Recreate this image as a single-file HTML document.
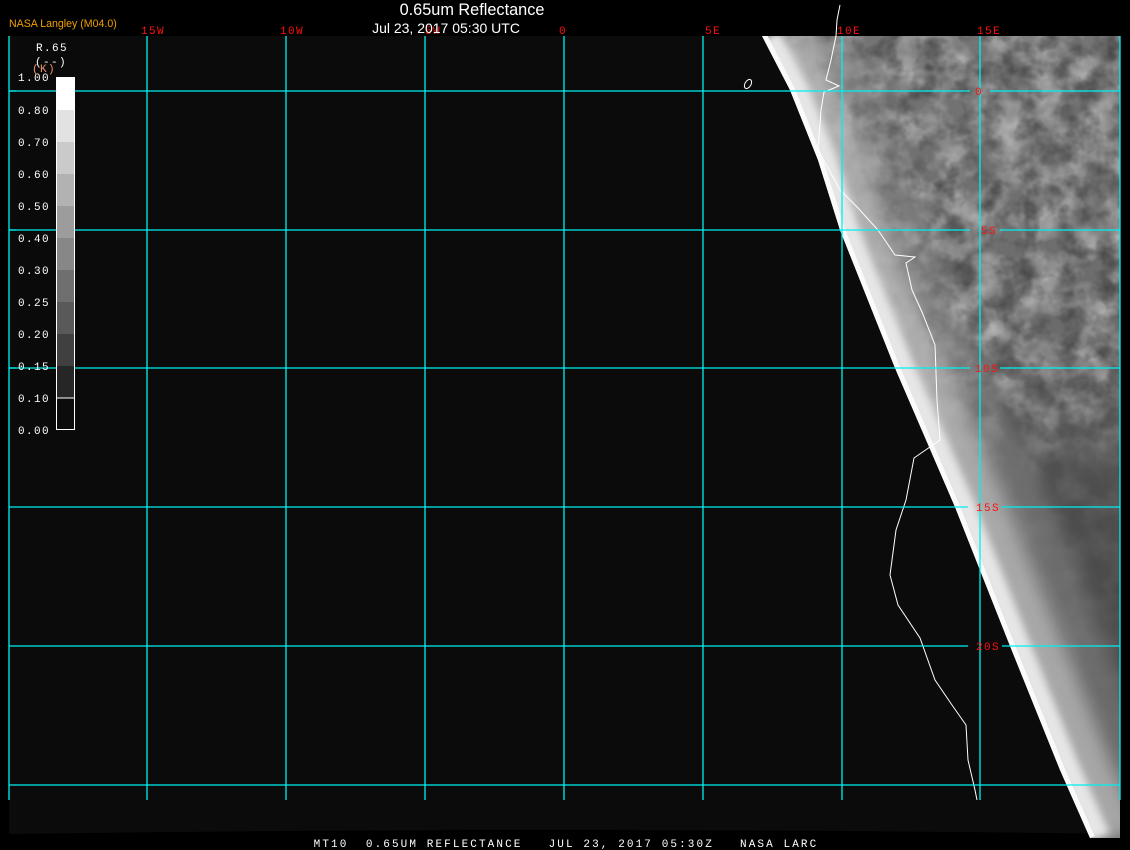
<!DOCTYPE html>
<html><head><meta charset="utf-8"><style>
html,body{margin:0;padding:0;background:#000;width:1130px;height:850px;overflow:hidden}
svg{display:block}
.m{font-family:"Liberation Mono","DejaVu Sans Mono",monospace;font-size:11px;letter-spacing:1.4px}
</style></head><body>
<svg width="1130" height="850" viewBox="0 0 1130 850" xmlns="http://www.w3.org/2000/svg">
<defs>
<clipPath id="sat"><polygon points="762,36 790,90 818,160 840,230 895,368 955,507 1010,646 1060,770 1090,838 1120,838 1120,36"/></clipPath>
<linearGradient id="base" x1="0" y1="0" x2="0" y2="1">
<stop offset="0" stop-color="#747474"/><stop offset="0.4" stop-color="#6a6a6a"/><stop offset="0.55" stop-color="#505050"/><stop offset="1" stop-color="#444"/>
</linearGradient>
<filter id="cl" x="0" y="0" width="100%" height="100%">
<feTurbulence type="fractalNoise" baseFrequency="0.035" numOctaves="3" seed="7"/>
<feColorMatrix type="matrix" values="0 0 0 0 0.55  0 0 0 0 0.55  0 0 0 0 0.55  1.6 0 0 0 -0.55"/>
</filter>
<filter id="cl2" x="0" y="0" width="100%" height="100%">
<feTurbulence type="fractalNoise" baseFrequency="0.05" numOctaves="3" seed="3"/>
<feColorMatrix type="matrix" values="0 0 0 0 0.05  0 0 0 0 0.05  0 0 0 0 0.05  0 1.8 0 0 -0.75"/>
</filter>
<filter id="bl" x="-20%" y="-20%" width="140%" height="140%"><feGaussianBlur stdDeviation="9"/></filter>
<filter id="bl2" x="-20%" y="-20%" width="140%" height="140%"><feGaussianBlur stdDeviation="4"/></filter>
<linearGradient id="fade" x1="0" y1="0" x2="0" y2="1"><stop offset="0" stop-color="#fff"/><stop offset="0.42" stop-color="#fff"/><stop offset="0.55" stop-color="#fff" stop-opacity="0.2"/><stop offset="1" stop-color="#fff" stop-opacity="0.05"/></linearGradient>
<mask id="mk"><rect x="740" y="36" width="390" height="800" fill="url(#fade)"/></mask>
</defs>
<rect width="1130" height="850" fill="#000"/>
<path d="M9,36 H1120 V834 Q566,826 9,834 Z" fill="#0b0b0b"/>
<g clip-path="url(#sat)">
<rect x="740" y="36" width="390" height="810" fill="url(#base)"/>
<g mask="url(#mk)">
<rect x="740" y="36" width="390" height="810" filter="url(#cl)"/>
<rect x="740" y="36" width="390" height="810" filter="url(#cl2)"/>
</g>
<g fill="none" stroke-linejoin="round">
<polyline points="812,36 838,90 866,160 888,230 948,368 1012,507 1070,646 1120,770 1150,838" stroke="#8c8c8c" stroke-width="70" opacity="0.5" filter="url(#bl)"/>
<polyline points="787,36 813,90 841,160 863,230 921,368 984,507 1040,646 1090,770 1120,838" stroke="#bdbdbd" stroke-width="44" opacity="0.75" filter="url(#bl)"/>
<polyline points="770,36 798,90 826,160 848,230 904,368 965,507 1020,646 1070,770 1100,838" stroke="#e6e6e6" stroke-width="22" filter="url(#bl2)"/>
<polyline points="762,36 790,90 818,160 840,230 895,368 955,507 1010,646 1060,770 1090,838" stroke="#fafafa" stroke-width="10"/>
</g>
</g>
<rect x="1120" y="36" width="10" height="814" fill="#000"/>
<polyline fill="none" stroke="#fff" stroke-width="1" points="840,5 837,20 836,36 831,60 826,80 839,86 824,92 821,110 818,150 828,168 840,190 858,208 878,230 895,255 915,257 906,263 912,290 922,312 935,345 937,400 940,440 914,458 906,500 896,530 890,575 898,605 920,638 935,680 952,705 966,725 968,760 975,790 977,800"/>
<ellipse cx="748" cy="84" rx="3" ry="5" transform="rotate(30 748 84)" fill="none" stroke="#fff" stroke-width="1"/>
<g stroke="#00f0f0" stroke-width="1.3">
<line x1="9" y1="36" x2="9" y2="800"/><line x1="147" y1="36" x2="147" y2="800"/><line x1="286" y1="36" x2="286" y2="800"/><line x1="425" y1="36" x2="425" y2="800"/><line x1="564" y1="36" x2="564" y2="800"/><line x1="703" y1="36" x2="703" y2="800"/><line x1="842" y1="36" x2="842" y2="800"/><line x1="980" y1="36" x2="980" y2="800"/><line x1="1120" y1="36" x2="1120" y2="800"/>
<line x1="9" y1="91" x2="970" y2="91"/><line x1="990" y1="91" x2="1120" y2="91"/>
<line x1="9" y1="230" x2="970" y2="230"/><line x1="1000" y1="230" x2="1120" y2="230"/>
<line x1="9" y1="368" x2="970" y2="368"/><line x1="1000" y1="368" x2="1120" y2="368"/>
<line x1="9" y1="507" x2="968" y2="507"/><line x1="1002" y1="507" x2="1120" y2="507"/>
<line x1="9" y1="646" x2="968" y2="646"/><line x1="1002" y1="646" x2="1120" y2="646"/>
<line x1="9" y1="785" x2="1120" y2="785"/>
</g>
<g class="m" fill="#ff1010" text-anchor="middle">
<text x="153" y="34">15W</text><text x="292" y="34">10W</text><text x="433" y="34">5W</text><text x="563" y="34">0</text><text x="713" y="34">5E</text><text x="849" y="34">10E</text><text x="989" y="34">15E</text>
<text x="979" y="95">0</text><text x="989" y="234">5S</text><text x="987" y="372">10S</text><text x="988" y="511">15S</text><text x="988" y="650">20S</text>
</g>
<rect x="16" y="36" width="64" height="405" fill="#0a0a0a"/>
<line x1="9" y1="91" x2="80" y2="91" stroke="#00f0f0" stroke-width="1.3"/>
<line x1="9" y1="230" x2="80" y2="230" stroke="#00f0f0" stroke-width="1.3"/>
<line x1="9" y1="368" x2="80" y2="368" stroke="#00f0f0" stroke-width="1.3"/>
<g>
<rect x="56" y="77" width="19" height="33" fill="#fff"/>
<rect x="56" y="110" width="19" height="32" fill="#e2e2e2"/>
<rect x="56" y="142" width="19" height="32" fill="#cacaca"/>
<rect x="56" y="174" width="19" height="32" fill="#b2b2b2"/>
<rect x="56" y="206" width="19" height="32" fill="#9c9c9c"/>
<rect x="56" y="238" width="19" height="32" fill="#878787"/>
<rect x="56" y="270" width="19" height="32" fill="#6f6f6f"/>
<rect x="56" y="302" width="19" height="32" fill="#595959"/>
<rect x="56" y="334" width="19" height="32" fill="#404040"/>
<rect x="56" y="366" width="19" height="32" fill="#262626"/>
<rect x="56.5" y="398" width="18" height="31.5" fill="#0c0c0c" stroke="#fff"/>
<line x1="56.5" y1="77" x2="56.5" y2="430" stroke="#fff"/><line x1="74.5" y1="77" x2="74.5" y2="430" stroke="#fff"/>
</g>
<g class="m" fill="#fff">
<text x="36" y="51">R.65</text><text x="35" y="65">(--)</text>
<text x="18" y="81">1.00</text><text x="18" y="114">0.80</text><text x="18" y="146">0.70</text><text x="18" y="178">0.60</text><text x="18" y="210">0.50</text><text x="18" y="242">0.40</text><text x="18" y="274">0.30</text><text x="18" y="306">0.25</text><text x="18" y="338">0.20</text><text x="18" y="370">0.15</text><text x="18" y="402">0.10</text><text x="18" y="434">0.00</text>
</g>
<text x="32" y="72" class="m" fill="#f09070" font-size="10">(K)</text>
<text x="472" y="15" font-family="Liberation Sans,sans-serif" font-size="16.3" fill="#fff" text-anchor="middle">0.65um Reflectance</text>
<text x="446" y="33" font-family="Liberation Sans,sans-serif" font-size="14" fill="#fff" text-anchor="middle">Jul 23, 2017 05:30 UTC</text>
<text x="9" y="27" font-family="Liberation Sans,sans-serif" font-size="10.6" fill="#f0a000">NASA Langley (M04.0)</text>
<text x="566" y="847" class="m" fill="#fff" text-anchor="middle" style="letter-spacing:2.1px" xml:space="preserve">MT10  0.65UM REFLECTANCE   JUL 23, 2017 05:30Z   NASA LARC</text>
</svg>
</body></html>
